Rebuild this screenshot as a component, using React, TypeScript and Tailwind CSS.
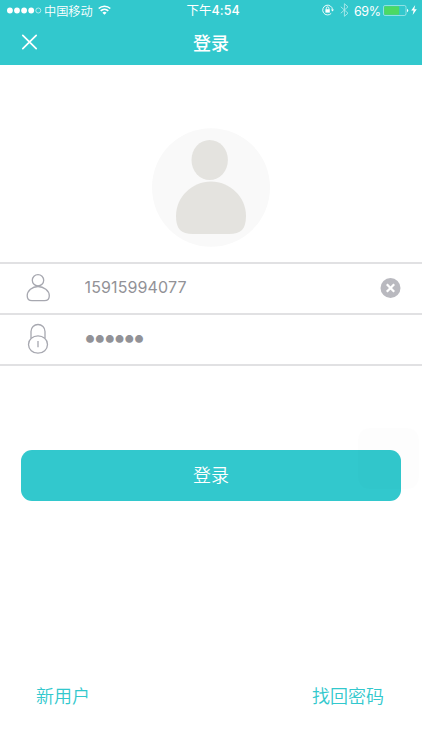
import { useState } from "react";

const cjk = "font-['Inter','Noto_Sans_CJK_SC',sans-serif]";

function StatusBar() {
  return (
    <div className="relative flex h-5 items-center justify-between pl-[7px] pr-[5px] text-[12px] leading-5 text-white">
      <div className="flex items-center">
        <svg width="35" height="8" viewBox="0 0 35 8" fill="#fff">
          <circle cx="2.9" cy="4.5" r="2.9" />
          <circle cx="10" cy="4.5" r="2.9" />
          <circle cx="17.1" cy="4.5" r="2.9" />
          <circle cx="24.2" cy="4.5" r="2.9" />
          <circle cx="31.3" cy="4.5" r="2.5" fill="none" stroke="#fff" strokeWidth="0.6" />
        </svg>
        <span className="ml-[2px] mt-[3px] text-[12.2px] font-[350]">中国移动</span>
        <svg className="ml-[5px]" width="13" height="10" viewBox="0 0 13 10" fill="none" stroke="#fff" strokeWidth="1.6">
          <path d="M0.7 3.5a8.4 8.4 0 0 1 11.6 0" />
          <path d="M2.7 5.9a5.5 5.5 0 0 1 7.6 0" />
          <path d="M6.5 9.7 4.4 7.7a3 3 0 0 1 4.2 0z" fill="#fff" stroke="none" />
        </svg>
      </div>
      <span className="absolute left-[186.5px] top-[1px] text-[12.5px] whitespace-nowrap">
        下午<span className="font-medium tracking-[0.1px]">4:54</span>
      </span>
      <div className="flex items-center">
        <svg width="12" height="12" viewBox="0 0 12 12" fill="none" stroke="#fff" strokeWidth="0.9">
          <path d="M9.2 9.4A4.9 4.9 0 1 1 10.5 5.6" />
          <path d="M8.9 5.4h3.1L10.5 7.4z" fill="#fff" stroke="none" />
          <rect x="3.4" y="5.2" width="4.4" height="3.4" fill="#fff" stroke="none" />
          <path d="M4.3 5.4V4.2a1.3 1.3 0 0 1 2.6 0v1.2" />
        </svg>
        <svg className="ml-[6px] opacity-60" width="9" height="14" viewBox="0 0 9 14" fill="none" stroke="#fff" strokeWidth="0.9">
          <path d="M0.8 3.8 8 10.2 4.4 13.3V0.7L8 3.8 0.8 10.2" />
        </svg>
        <span className="ml-[5px] mt-[3px] w-[28px] text-[12.5px] tracking-[-0.4px]">69%</span>
        <svg className="ml-[1px]" width="26" height="11" viewBox="0 0 26 11">
          <rect x="0.5" y="0.5" width="22.5" height="10" rx="1.6" fill="none" stroke="#fff" strokeOpacity="0.65" strokeWidth="0.7" />
          <rect x="1.2" y="1.2" width="15" height="8.6" rx="0.8" fill="#4cd964" />
          <path d="M24 3.8a1.8 1.8 0 0 1 0 3.4z" fill="#fff" />
        </svg>
        <svg className="ml-[2px]" width="6" height="10" viewBox="0 0 6 10" fill="#fff">
          <path d="M4.2 0 0.2 5.6h2.4L1.6 10 5.8 4.2H3.3z" />
        </svg>
      </div>
    </div>
  );
}

function UserIcon() {
  return (
    <svg className="-mt-[2px]" width="24" height="30" viewBox="0 0 24 30" fill="none" stroke="#a7a8b0" strokeWidth="1.3">
      <circle cx="12" cy="7.3" r="5.7" />
      <path d="M12 13.5C17.8 13.5 23.3 17.8 23.3 22.8 23.3 26 21.5 27.7 18.5 27.7H6C2.9 27.7 1.2 26 1.2 22.8 1.2 17.8 6.2 13.5 12 13.5z" />
    </svg>
  );
}

function LockIcon() {
  return (
    <svg className="-mt-[1px]" width="24" height="32" viewBox="0 0 24 32" fill="none" stroke="#a7a8b0" strokeWidth="1.3">
      <path d="M5 15.2V8.5a7 7 0 0 1 14 0v6.7" />
      <ellipse cx="12" cy="21.5" rx="9.5" ry="8.7" />
      <path d="M12 18v6.3" />
    </svg>
  );
}

export default function App() {
  const [phone, setPhone] = useState("15915994077");
  const [password, setPassword] = useState("123456");

  return (
    <div className={`relative flex h-[750px] w-[422px] flex-col overflow-hidden bg-white ${cjk}`}>
      <header className="h-[65px] shrink-0 bg-[#32c8cd] text-white">
        <StatusBar />
        <div className="grid h-[45px] grid-cols-3 items-center">
          <button aria-label="关闭" className="ml-[21px] w-4">
            <svg width="17" height="17" viewBox="0 0 17 17" stroke="#fff" strokeWidth="1.7" strokeLinecap="round">
              <path d="M1.8 1.3 15.2 14.7M15.2 1.3 1.8 14.7" />
            </svg>
          </button>
          <h1 className="pt-[2px] text-center text-[18px] font-medium">登录</h1>
        </div>
      </header>

      <div className="flex h-[197px] shrink-0 justify-center pt-[63px]">
        <svg width="118" height="119" viewBox="0 0 118 119">
          <ellipse cx="59" cy="59.5" rx="59" ry="59.3" fill="#f9f9f9" />
          <ellipse cx="57.7" cy="32" rx="18.2" ry="20" fill="#e4e3df" />
          <path d="M59 53.5C78 53.5 94 69 94 88 94 101 89 106 77 106H41C29 106 24 101 24 88 24 69 40 53.5 59 53.5z" fill="#e4e3df" />
        </svg>
      </div>

      <form className="shrink-0 border-t-2 border-[#e1e1e3] text-[#929297]">
        <label className="flex h-[51px] items-center border-b-2 border-[#e1e1e3] pl-[26px] pr-[21px]">
          <UserIcon />
          <input
            className="-mt-[3px] ml-[34.5px] min-w-0 flex-1 text-[16px] tracking-[0.12px] outline-none"
            value={phone}
            onChange={(e) => setPhone(e.target.value)}
          />
          <button type="button" aria-label="清除" onClick={() => setPhone("")}>
            <svg width="21" height="21" viewBox="0 0 21 21">
              <circle cx="10.5" cy="10" r="10" fill="#b9b9bf" />
              <path d="M6.8 6.3l7.4 7.4M14.2 6.3l-7.4 7.4" stroke="#fff" strokeWidth="2.3" />
            </svg>
          </button>
        </label>
        <label className="flex h-[51px] items-center border-b-2 border-[#e1e1e3] pl-[26px] pr-[21px]">
          <LockIcon />
          <input
            type="password"
            className="-mt-[3px] ml-[33px] min-w-0 flex-1 text-[25px] tracking-[-4.25px] outline-none"
            value={password}
            onChange={(e) => setPassword(e.target.value)}
          />
        </label>
      </form>

      <button className="mx-[21px] mt-[84px] h-[51px] shrink-0 rounded-[11px] bg-[#32c8cd] text-[18px] font-[350] text-white">
        登录
      </button>

      <div className="mt-auto flex justify-between pb-[40px] pl-[36px] pr-[38px] text-[18px] font-[350] leading-[27px] text-[#32c8cd]">
        <button>新用户</button>
        <button>找回密码</button>
      </div>

      {/* faded assistive touch button */}
      <div className="pointer-events-none absolute left-[358px] top-[428px] h-[61px] w-[61px] rounded-[11px] bg-black/[0.008]" />
    </div>
  );
}
